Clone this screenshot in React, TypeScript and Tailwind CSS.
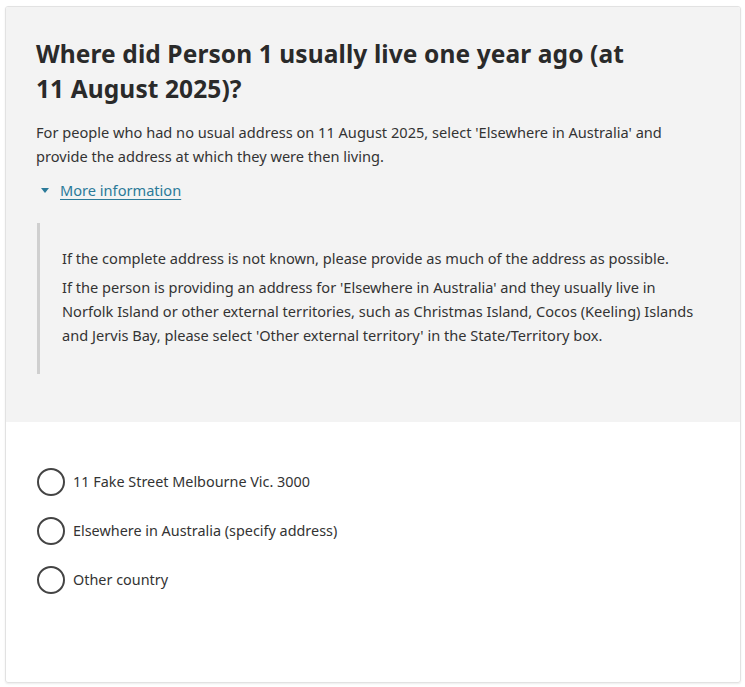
import React from "react";

export default function App() {
  const options = [
    "11 Fake Street Melbourne Vic. 3000",
    "Elsewhere in Australia (specify address)",
    "Other country",
  ];
  return (
    <div className="w-[745px] h-[687px] bg-white pt-[6px] pl-[5px]" style={{ fontFamily: '"Noto Sans", "Open Sans", sans-serif' }}>
      <div className="w-[736px] h-[677px] border border-[#e2e2e2] rounded-[3px] overflow-hidden shadow-[0_1px_2px_rgba(0,0,0,0.08)] flex flex-col">
        <div className="bg-[#f3f3f3] h-[415px] pl-[30px] pr-[40px] pt-[29px]">
          <h1 className="max-w-[615px] text-[24.5px] leading-[35px] font-bold text-[#2a2a2a] tracking-[0.1px]">
            Where did Person 1 usually live one year ago (at 11 August 2025)?
          </h1>
          <p className="mt-[14px] text-[14.6px] leading-[24px] text-[#333]">
            For people who had no usual address on 11 August 2025, select 'Elsewhere in Australia' and provide the address at which they were then living.
          </p>
          <div className="mt-[11px] flex items-center h-[24px]">
            <svg width="8" height="6" viewBox="0 0 8 6" className="ml-[5px] mr-[11px]">
              <path d="M0 0 L8 0 L4 5 Z" fill="#2b7a99" />
            </svg>
            <span className="text-[14.6px] text-[#2b7a99] underline underline-offset-[3px]">More information</span>
          </div>
          <div className="mt-[20px] ml-[1px] border-l-[3px] border-[#cfcfcf] h-[151px] pl-[22px] pt-[23px] text-[14.6px] text-[#333]">
            <p className="leading-[24px]">If the complete address is not known, please provide as much of the address as possible.</p>
            <p className="mt-[5px] leading-[24px]">
              If the person is providing an address for 'Elsewhere in Australia' and they usually live in Norfolk Island or other external territories, such as Christmas Island, Cocos (Keeling) Islands and Jervis Bay, please select 'Other external territory' in the State/Territory box.
            </p>
          </div>
        </div>
        <div className="flex flex-col gap-[21px] pt-[46px] pl-[31px]">
          {options.map((o) => (
            <label key={o} className="flex items-center gap-[8px] text-[14.4px] text-[#333]">
              <span className="w-[28px] h-[28px] rounded-full border-2 border-[#444] bg-white shrink-0" />
              {o}
            </label>
          ))}
        </div>
      </div>
    </div>
  );
}
